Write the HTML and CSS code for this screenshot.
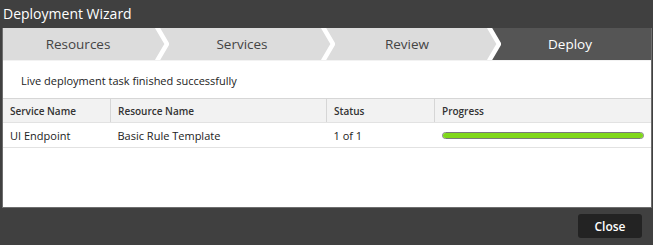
FILE: index.html
```html
<!DOCTYPE html>
<html lang="en">

<head>
  <meta charset="UTF-8">
  <meta name="viewport" content="width=device-width, initial-scale=1.0">
  <title>Deployment Wizard</title>
  <link rel="stylesheet" href="styles.css">
</head>

<body>

  <div id="dialog">
    <div class="titlebar">Deployment Wizard</div>

    <div class="panel">
      <!-- wizard steps -->
      <div class="steps">
        <div class="step">Resources</div>
        <svg class="sep" viewBox="0 0 16 32" preserveAspectRatio="none">
          <polygon class="prev" points="0,0 4,0 14,16 4,32 0,32"></polygon>
          <polygon class="next" points="4,0 16,0 16,32 4,32 14,16"></polygon>
          <polyline points="4,-1 14,16 4,33"></polyline>
        </svg>
        <div class="step services">Services</div>
        <svg class="sep" viewBox="0 0 16 32" preserveAspectRatio="none">
          <polygon class="prev" points="0,0 4,0 14,16 4,32 0,32"></polygon>
          <polygon class="next" points="4,0 16,0 16,32 4,32 14,16"></polygon>
          <polyline points="4,-1 14,16 4,33"></polyline>
        </svg>
        <div class="step review">Review</div>
        <svg class="sep to-active" viewBox="0 0 16 32" preserveAspectRatio="none">
          <polygon class="prev" points="0,0 4,0 14,16 4,32 0,32"></polygon>
          <polygon class="next" points="4,0 16,0 16,32 4,32 14,16"></polygon>
          <polyline points="4,-1 14,16 4,33"></polyline>
        </svg>
        <div class="step active">Deploy</div>
      </div>

      <p class="message">Live deployment task finished successfully</p>

      <table class="grid">
        <thead>
          <tr>
            <th class="col-service">Service Name</th>
            <th class="col-resource">Resource Name</th>
            <th class="col-status">Status</th>
            <th>Progress</th>
          </tr>
        </thead>
        <tbody>
          <tr>
            <td>UI Endpoint</td>
            <td>Basic Rule Template</td>
            <td>1 of 1</td>
            <td><div class="progress"><div class="bar" style="width: 100%"></div></div></td>
          </tr>
        </tbody>
      </table>
    </div>

    <div class="footer">
      <button class="btn">Close</button>
    </div>
  </div>

</body>

</html>
```

FILE: styles.css
```css
body {
  margin: 0;
  font-family: "Open Sans", Arial, sans-serif;
  background-color: #404040;
  color: #222;
}

#dialog {
  width: 653px;
  height: 245px;
  display: flex;
  flex-direction: column;
}

.titlebar {
  height: 28px;
  line-height: 27px;
  padding-left: 3px;
  font-size: 14px;
  color: white;
}

.panel {
  margin: 0 1px 0 2px;
  height: 179px;
  background-color: white;
  border: 1px solid #6e6e6e;
  border-top: none;
}

.steps {
  display: flex;
  height: 32px;
  border-bottom: 1px solid #f2f2f2;
}

.step {
  flex: 1;
  text-align: center;
  line-height: 32px;
  font-size: 13.5px;
  color: #444;
  background-color: #dcdcdc;
}

.step.services {
  text-indent: -4px;
}

.step.review {
  text-indent: -6px;
}

.step.active {
  text-indent: -12px;
  background-color: #555555;
  color: white;
}

.sep {
  width: 16px;
  height: 32px;
  flex-shrink: 0;
}

.sep .prev,
.sep .next {
  fill: #dcdcdc;
}

.sep.to-active .next {
  fill: #555555;
}

.sep polyline {
  fill: none;
  stroke: white;
  stroke-width: 4.5;
}

.message {
  margin: 0;
  height: 37px;
  line-height: 40px;
  padding-left: 18px;
  font-size: 11px;
}

.grid {
  width: 100%;
  border-collapse: collapse;
  font-size: 11px;
}

.grid th {
  height: 23px;
  padding: 0 0 0 7px;
  text-align: left;
  font-size: 10px;
  font-weight: 600;
  color: #333;
  background-color: #f2f2f2;
  border-top: 1px solid #d6d6d6;
  border-bottom: 1px solid #e2e2e2;
  border-left: 1px solid #d6d6d6;
}

.grid th:first-child {
  border-left: none;
}

.grid td {
  height: 24px;
  padding: 0 0 0 7px;
  border-bottom: 1px solid #e2e2e2;
}

.col-service {
  width: 100px;
}

.col-resource {
  width: 208px;
}

.col-status {
  width: 100px;
}

.progress {
  width: 200px;
  height: 5px;
  border: 1px solid #7a7a7a;
  border-radius: 4px;
  background-color: #eee;
  overflow: hidden;
}

.progress .bar {
  height: 100%;
  background-color: #80d81a;
}

.footer {
  display: flex;
  justify-content: flex-end;
  padding: 6px 11px 0 0;
}

.btn {
  width: 64px;
  height: 24px;
  padding: 0;
  font-family: inherit;
  font-size: 12px;
  font-weight: 600;
  color: white;
  background-color: #232323;
  border: none;
  border-radius: 3px;
  cursor: pointer;
}
```
